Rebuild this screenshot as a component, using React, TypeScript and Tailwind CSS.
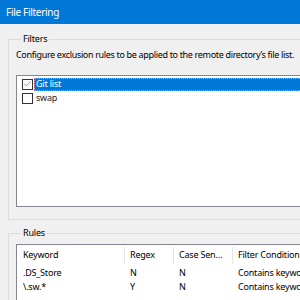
import { Check } from 'lucide-react'

const font = { fontFamily: '"Noto Sans", "Open Sans", sans-serif' }

const filters = [
  { name: 'Git list', checked: true, selected: true },
  { name: 'swap', checked: false, selected: false },
]

const rules = [
  { keyword: '.DS_Store', regex: 'N', caseSensitive: 'N', condition: 'Contains keyword' },
  { keyword: '\\.sw.*', regex: 'Y', caseSensitive: 'N', condition: 'Contains keyword' },
]

function CheckBox({ checked }: { checked: boolean }) {
  return (
    <div className="w-[11px] h-[11px] shrink-0 border border-[#333333] bg-white flex items-center justify-center">
      {checked ? <Check size={10} strokeWidth={1.4} className="text-[#333333]" /> : null}
    </div>
  )
}

export default function App() {
  return (
    <div
      className="w-[300px] h-[300px] overflow-hidden bg-[#f0f0f0] text-[9px] tracking-[-0.2px] text-black"
      style={font}
    >
      <div className="h-[24px] bg-[#0078d7] text-white text-[10px] tracking-[-0.3px] pl-[6px] flex items-center">
        File Filtering
      </div>
      <div className="w-[330px] pl-[8px] pt-[7px] flex flex-col gap-[5px]">
        <fieldset className="border border-[#dcdcdc] pl-[7px] pb-[12px]">
          <legend className="ml-[5px] px-[2px] leading-[16px]">Filters</legend>
          <p className="leading-[16px] tracking-[-0.33px] whitespace-nowrap">
            Configure exclusion rules to be applied to the remote directory’s file list.
          </p>
          <div className="mt-[12px] h-[132px] border border-[#828790] bg-white pt-[1px] pl-[5px]">
            {filters.map((f) => (
              <div key={f.name} className="h-[14px] flex items-center">
                <CheckBox checked={f.checked} />
                <div
                  className={
                    f.selected
                      ? 'ml-[1px] flex-1 h-[13px] pl-[2px] flex items-center bg-[#0078d7] text-white outline outline-1 outline-dotted outline-[#d98cb3] -outline-offset-1'
                      : 'ml-[1px] flex-1 h-[13px] pl-[2px] flex items-center text-[#222]'
                  }
                >
                  {f.name}
                </div>
              </div>
            ))}
          </div>
        </fieldset>
        <fieldset className="border border-[#dcdcdc] pl-[7px] pb-[12px]">
          <legend className="ml-[5px] px-[2px] leading-[16px]">Rules</legend>
          <div className="mt-[3px] h-[80px] border border-[#828790] bg-white">
            <div className="grid grid-cols-[108px_49px_59px_1fr] h-[20px] items-center">
              <div className="pl-[6px] border-r border-[#e5e5e5] h-[17px] flex items-center">Keyword</div>
              <div className="pl-[5px] border-r border-[#e5e5e5] h-[17px] flex items-center">Regex</div>
              <div className="pl-[5px] border-r border-[#e5e5e5] h-[17px] flex items-center">Case Sen…</div>
              <div className="pl-[5px] h-[17px] flex items-center whitespace-nowrap">Filter Condition</div>
            </div>
            <div className="pt-[1px]">
              {rules.map((r) => (
                <div key={r.keyword} className="grid grid-cols-[108px_49px_59px_1fr] h-[14px] items-center">
                  <div className="pl-[6px]">{r.keyword}</div>
                  <div className="pl-[5px]">{r.regex}</div>
                  <div className="pl-[5px]">{r.caseSensitive}</div>
                  <div className="pl-[5px] whitespace-nowrap">{r.condition}</div>
                </div>
              ))}
            </div>
          </div>
        </fieldset>
      </div>
    </div>
  )
}
